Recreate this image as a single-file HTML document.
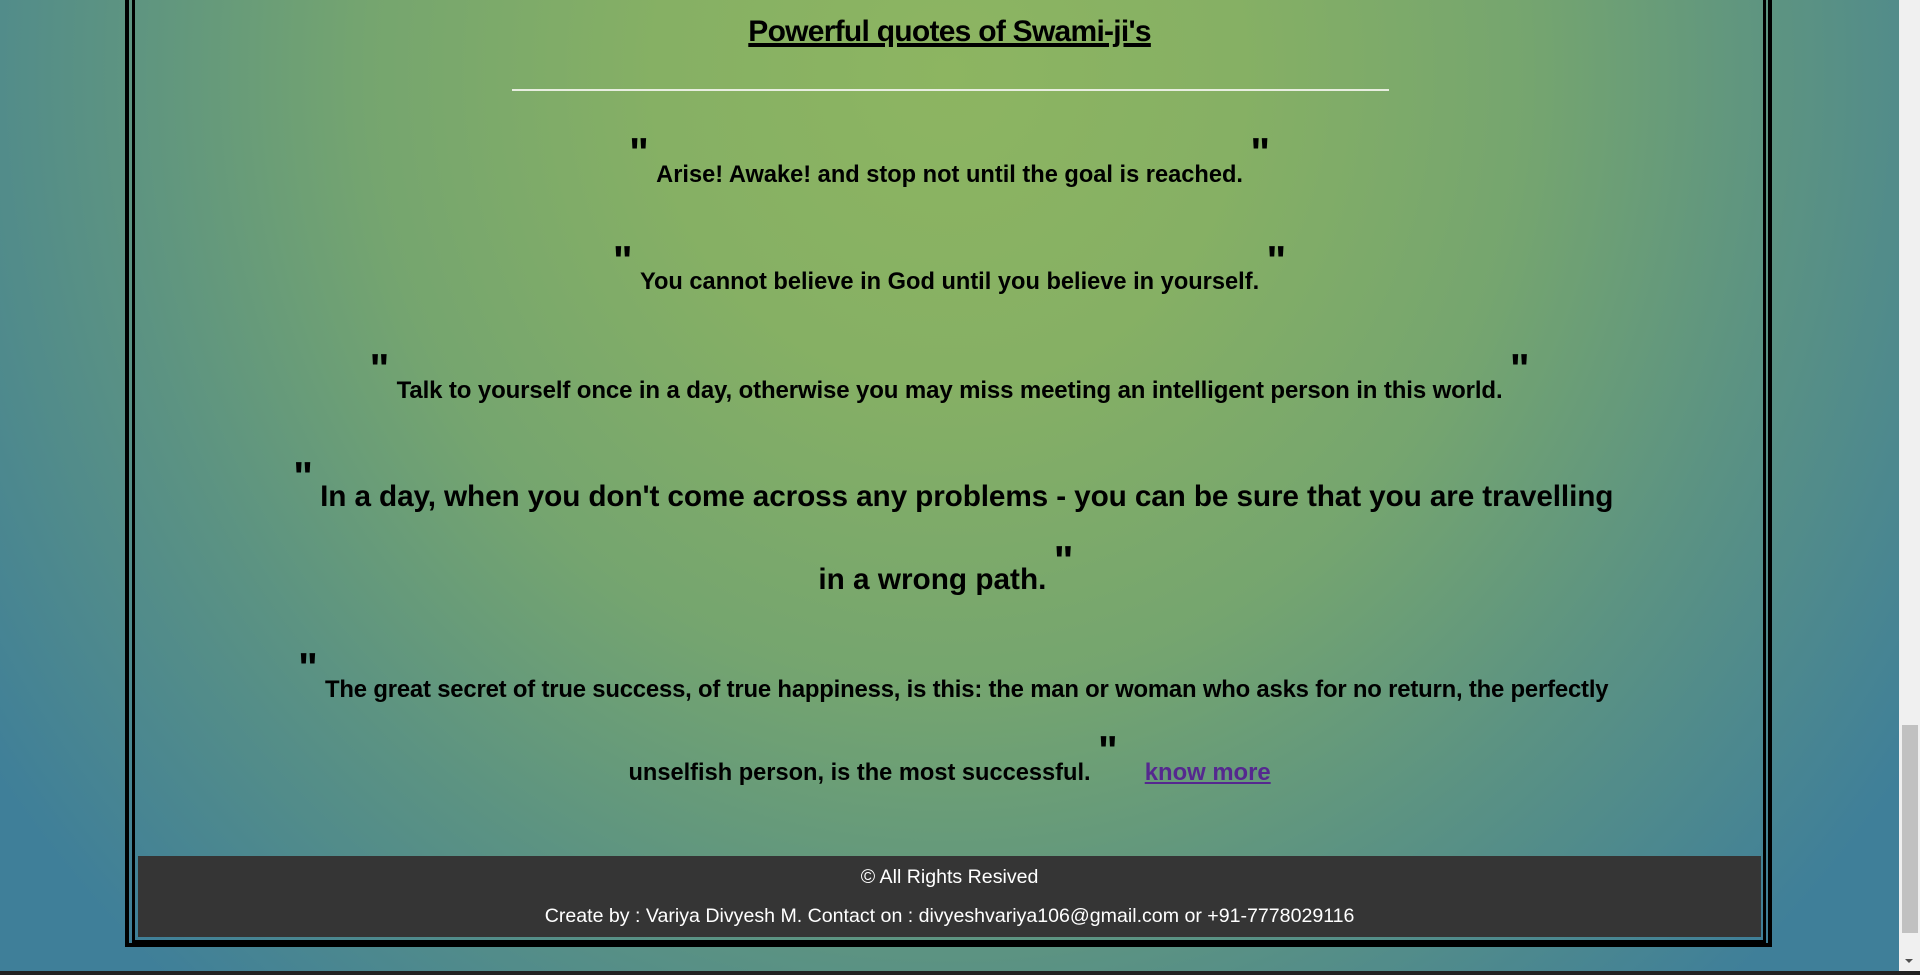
<!DOCTYPE html>
<html><head><meta charset="utf-8"><style>
html,body{margin:0;padding:0;overflow:hidden;width:1920px;height:975px;}
#w{zoom:1.22449;width:1568px;height:796px;position:relative;overflow:hidden;
background:radial-gradient(ellipse 950px 1000px at 775px 60px,#8db561 0%,#86b064 25%,#75a56f 50%,#5c9382 72%,#3f7f99 100%);
font-family:"Liberation Sans",sans-serif;}
.box{position:absolute;left:102px;top:-10px;width:1339px;height:777px;border:4px solid #000;}
.inner{position:absolute;left:108px;top:-10px;width:1329px;height:775px;border:3px solid #000;}
.content{position:absolute;left:113px;top:0;width:1325px;height:699px;}
.line{position:absolute;left:0;width:1325px;text-align:center;font-weight:bold;color:#000;white-space:nowrap;}
.q{display:inline-block;font-size:34px;position:relative;top:-12px;line-height:0;margin:0 6px;}
.footer{position:absolute;left:113px;top:699px;width:1325px;height:66px;background:#353535;color:#fff;text-align:center;font-size:16px;}
.sb{position:absolute;left:1551px;top:0;width:17px;height:796px;background:#f0f0f0;}
</style></head><body><div id="w">
<div class="box"></div><div class="inner"></div>
<div class="content">
<div class="line" style="top:12px;font-size:24.5px;letter-spacing:-0.6px;text-decoration:underline;text-decoration-thickness:3px;">Powerful quotes of Swami-ji's</div>
<div style="position:absolute;left:305px;top:73px;width:716px;height:1px;background:#e8eee0;"></div>
<div class="line" style="top:132px;font-size:19.3px;"><span class="q">"</span>Arise! Awake! and stop not until the goal is reached.<span class="q">"</span></div>
<div class="line" style="top:220px;font-size:19.3px;"><span class="q">"</span>You cannot believe in God until you believe in yourself.<span class="q">"</span></div>
<div class="line" style="top:308px;font-size:19.6px;letter-spacing:-0.1px;"><span class="q">"</span>Talk to yourself once in a day, otherwise you may miss meeting an intelligent person in this world.<span class="q">"</span></div>
<div class="line" style="top:392px;font-size:24.3px;letter-spacing:-0.1px;"><span class="q">"</span>In a day, when you don't come across any problems - you can be sure that you are travelling</div>
<div class="line" style="top:460px;font-size:24.3px;">in a wrong path.<span class="q">"</span></div>
<div class="line" style="top:552px;font-size:19.5px;letter-spacing:-0.15px;"><span class="q">"</span>The great secret of true success, of true happiness, is this: the man or woman who asks for no return, the perfectly</div>
<div class="line" style="top:620px;font-size:19.3px;">unselfish person, is the most successful.<span class="q">"</span> &nbsp; <a style="color:#55288f;text-decoration:underline;font-size:19.5px;">know more</a></div>
</div>
<div class="footer"><div style="position:absolute;top:8px;width:100%;">© All Rights Resived</div><div style="position:absolute;top:40px;width:100%;">Create by : Variya Divyesh M. Contact on : divyeshvariya106@gmail.com or +91-7778029116</div></div>
<div class="sb"><div style="position:absolute;left:2px;top:592px;width:13px;height:170px;background:#c1c1c1;"></div><div style="position:absolute;left:5px;top:783px;width:0;height:0;border-left:3.5px solid transparent;border-right:3.5px solid transparent;border-top:4px solid #505050;"></div></div>
<div style="position:absolute;left:0;top:793px;width:1568px;height:3px;background:#222;"></div>
</div></body></html>
